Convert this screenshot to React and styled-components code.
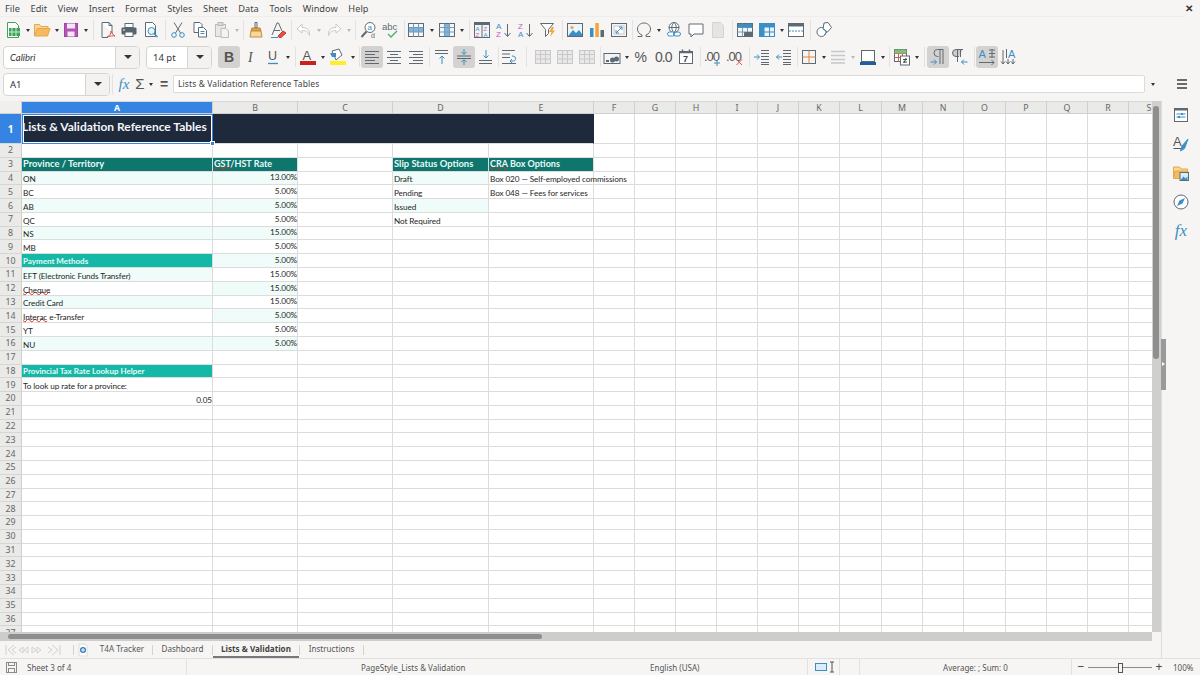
import React from 'react';
import styled, { createGlobalStyle } from 'styled-components';

const Global = createGlobalStyle`
  html, body { margin: 0; padding: 0; width: 1200px; height: 675px; overflow: hidden; background: #f6f5f4; }
  * { box-sizing: border-box; }
`;
const UI = `"Noto Sans", "Open Sans", sans-serif`;
const CELL = `Lato, "Noto Sans", sans-serif`;

const Window = styled.div`
  width: 1200px; height: 675px; display: flex; flex-direction: column; overflow: hidden;
  background: #f6f5f4; font-family: ${UI}; color: #3d3d3d;
`;
const MenuBar = styled.div`
  height: 17px; flex: none; display: flex; align-items: center; padding: 0 5px; gap: 10.6px; font-size: 9.2px; color: #444;
  border-bottom: 1px solid #eeedec; margin-right: 16px; position: relative;
`;
const MenuItem = styled.span`letter-spacing: .05px;`;
const Close = styled.span`
  position: absolute; left: 1185px; top: 2px; font-size: 10px; font-weight: 700; line-height: 12px; color: #333;
`;
const Toolbar = styled.div`
  height: ${p => p.$h}px; display: flex; align-items: center; padding-left: ${p => p.$pl || 0}px; padding-bottom: ${p => p.$pb || 0}px; flex: none;
`;
const ToolBtn = styled.div`
  width: 22px; height: 22px; flex: none; display: flex; align-items: center; justify-content: center; border-radius: 3px;
  background: ${p => p.$active ? '#d3d2d0' : 'transparent'};
  svg { display: block; }
`;
const Caret = styled.div`
  width: ${p => p.$w}px; height: 22px; flex: none; display: flex; align-items: center; justify-content: center;
  &::after { content: ''; border: 2.5px solid transparent; border-top: 3px solid ${p => p.$dim ? '#b9b9b9' : '#333'}; border-bottom: 0; }
`;
const Sep = styled.div`
  width: ${p => p.$w}px; height: 20px; flex: none; position: relative;
  &::after { content: ''; position: absolute; left: 50%; top: 0; bottom: 0; width: 1px; background: #e3e2e0; }
`;
const Combo = styled.div`
  width: ${p => p.$w}px; height: 23px; flex: none; display: flex; border: 1px solid #d6d5d3; border-radius: 4px; background: #fff; overflow: hidden;
  margin-right: ${p => p.$mr || 0}px; font-size: 9.5px; color: #333;
`;
const ComboText = styled.div`
  flex: 1; display: flex; align-items: center; padding-left: 6px; font-style: ${p => p.$italic ? 'italic' : 'normal'};
  font-family: ${p => p.$italic ? CELL : UI};
`;
const ComboBtn = styled.div`
  width: 24px; background: #f3f2f1; border-left: 1px solid #d6d5d3; display: flex; align-items: center; justify-content: center;
  &::after { content: ''; border: 4px solid transparent; border-top: 4.5px solid #333; border-bottom: 0; }
`;
const FormulaInput = styled.div`
  width: 972px; height: 18px; flex: none; background: #fff; border: 1px solid #dcdbd9; border-radius: 2px; padding-left: 4px;
  font-size: 8.5px; letter-spacing: .1px; line-height: 16px; color: #444; margin-left: 1px;
`;
const FxBtn = styled.div`
  width: ${p => p.$w}px; flex: none; text-align: center; color: ${p => p.$c || '#555'};
  font: ${p => p.$font};
`;
const Hamburger = styled.div`
  width: 14px; height: 14px; flex: none; margin-left: 15px; display: flex;
`;
const Main = styled.div`
  height: 557px; display: flex; flex: none; overflow: hidden; position: relative;
`;
const SheetArea = styled.div`width: 1162px; height: 557px; flex: none; display: flex; flex-direction: column; border-right: 1px solid #dedddb;`;
const SheetTop = styled.div`flex: none; height: 531px; display: flex; overflow: hidden; position: relative;`;
const Grid = styled.div`
  width: 1152px; flex: none; display: grid; align-content: start; background: #fff; overflow: hidden;
  grid-template-columns: 22px 191px 85px 95px 96px 105px 41px 41px 41px 41px 41px 41px 42px 41px 41px 42px 41px 41px 41px 41px;
  grid-template-rows: 13px 30px repeat(36, 13.79px);
  font-family: ${CELL}; color: #222;
`;
const ColHead = styled.div`
  background: ${p => p.$sel ? '#3584e4' : '#eaeae8'}; color: ${p => p.$sel ? '#fff' : '#666'};
  font: ${p => p.$sel ? 700 : 400} 8.8px ${UI}; display: flex; align-items: center; justify-content: center;
  border-right: 1px solid #cfcfcd; border-bottom: 1px solid #cfcfcd; border-top: 1px solid #d8d8d6;
`;
const RowHead = styled.div`
  background: ${p => p.$sel ? '#3584e4' : '#eaeae8'}; color: ${p => p.$sel ? '#fff' : '#666'};
  font: ${p => p.$sel ? 700 : 400} ${p => p.$sel ? 10 : 8.8}px ${UI}; display: flex; align-items: center; justify-content: center;
  border-right: 1px solid #cfcfcd; border-bottom: 1px solid #d6d6d4;
`;
const Corner = styled.div`background: #f0efee; border-right: 1px solid #cfcfcd; border-bottom: 1px solid #cfcfcd;`;
const Cell = styled.div`
  background: ${p => p.$bg || '#fff'}; color: ${p => p.$c || '#262626'}; white-space: nowrap; min-width: 0;
  border-right: 1px solid ${p => p.$noline ? (p.$bg || 'transparent') : '#dcdcdc'};
  border-bottom: 1px solid #dcdcdc; padding: ${p => p.$up ? '0 0 2px 1px' : '0 0 0 1px'};
  display: flex; align-items: ${p => p.$head ? 'center' : 'flex-end'}; justify-content: ${p => p.$right ? 'flex-end' : 'flex-start'};
  font-weight: ${p => p.$bold ? 700 : 400}; font-size: ${p => p.$fs || 8.2}px; line-height: 10px;
  letter-spacing: ${p => p.$bold ? 0 : -0.1}px;
  ${p => p.$lift ? `position: relative; z-index: ${p.$lift};` : ''}
  ${p => p.$span ? `grid-column: span ${p.$span};` : ''}
`;
const TitleCell = styled(Cell)`
  align-items: center; padding: 0 0 4px 0; position: relative; box-shadow: inset 0 0 0 1px #fff; border: 1px solid #3584e4; z-index: 3;
  text-indent: -1px; line-height: 14px;
`;
const Handle = styled.span`
  position: absolute; right: -3px; bottom: -3px; width: 5px; height: 5px; background: #3584e4; border: 1px solid #fff;
`;
const CellText = styled.span`display: block;`;
const Squiggle = styled.span`
  text-decoration: underline wavy #dc2f26 1px; text-underline-offset: -1.5px; text-decoration-skip-ink: none;
`;
const VScroll = styled.div`
  width: 9px; flex: none; background: #cfcfcd; padding: 5px 1px 0; 
`;
const VThumb = styled.div`width: 6px; height: 253px; background: #8e8e8e; border-radius: 3px;`;
const HScroll = styled.div`
  flex: none; height: 9px; width: 1152px; background: #cdcdcb; padding: 1.5px 0 0 8px; position: relative;
`;
const HThumb = styled.div`width: 534px; height: 5px; background: #8e8e8e; border-radius: 3px;`;
const TabBar = styled.div`
  flex: 1; display: flex; align-items: center; font-size: 8.1px; color: #555; padding-left: 5px;
`;
const TabNav = styled.div`width: 60px; flex: none; display: flex; align-items: center; margin-right: 8px;`;
const TabSep = styled.div`width: 1px; height: 10px; background: #d3d2d0; flex: none;`;
const Tab = styled.div`
  height: 17px; width: ${p => p.$w}px; flex: none; display: flex; align-items: center; justify-content: center;
  font-weight: ${p => p.$active ? 700 : 400}; color: ${p => p.$active ? '#444' : '#555'};
  border-bottom: ${p => p.$active ? '2px solid #77767b' : '2px solid transparent'};
`;
const AddTab = styled.div`width: 18px; flex: none; display: flex; justify-content: center;`;
const Sidebar = styled.div`
  width: 38px; flex: none; display: flex; flex-direction: column; align-items: center; gap: 11px; padding-top: 5px;
`;
const SideGrip = styled.div`
  position: absolute; left: 1160.5px; top: 238px; width: 5px; height: 51px; background: #9a9a9a;
  &::after { content: ''; position: absolute; left: 1px; top: 23px; border: 2.5px solid transparent; border-left: 3px solid #fff; border-right: 0; }
`;
const StatusBar = styled.div`
  flex: none; height: 17px; display: flex; align-items: center; font-size: 8px; color: #555; border-top: 1px solid #e2e1df;
`;
const StatusCell = styled.div`
  width: ${p => p.$w}px; flex: none; height: 100%; display: flex; align-items: center; justify-content: ${p => p.$center ? 'center' : 'flex-start'};
  padding-left: ${p => p.$pl || 0}px; border-right: ${p => p.$line ? '1px solid #e2e1df' : '0'}; gap: ${p => p.$gap || 0}px;
`;
const Slider = styled.div`
  width: 64px; height: 1px; background: #8a8a8a; position: relative; flex: none;
  &::after { content: ''; position: absolute; left: 30px; top: -3.5px; width: 3px; height: 8px; border: 1px solid #555; background: #f6f5f4; }
`;
const ZoomGlyph = styled.span`font-size: 12px; line-height: 12px; color: #444; width: 14px; text-align: center; flex: none;`;
const ZoomLabel = styled.span`margin-left: 7px;`;

const G = '#5e6a73', B = '#3b8fc4';
const S = ({ children, s = 18 }) => <svg width={s} height={s} viewBox="0 0 18 18" fill="none" strokeWidth="1">{children}</svg>;

const lines = (xs, ys, c = G) => ys.map((y, i) => <path key={i} d={`M${xs[i % xs.length][0]} ${y}H${xs[i % xs.length][1]}`} stroke={c} />);
const tableIcon = (hdr, grey) => <>
  <rect x="1.5" y="2.5" width="15" height="13" fill={grey ? '#e9e9e9' : '#f2f7fb'} stroke={grey ? '#c8c8c8' : G} />
  {hdr === 'row' && <rect x="2" y="6.500" width="14" height="4.500" fill="#7ab6e2" />}
  {hdr === 'col' && <rect x="6.500" y="3" width="5" height="12" fill="#7ab6e2" />}
  <path d="M6.5 2.5v13M11.5 2.5v13M1.5 6.5h15M1.5 11h15" stroke={grey ? '#c8c8c8' : '#7f98ab'} />
</>;
const ICONS = {
  new: <><path d="M3.5 1.5h8l3 3v12h-11z" fill="#fff" stroke="#3fa35a" /><rect x="5" y="7" width="11" height="8" fill="#3fa35a" /><path d="M8 7v8M12 7v8M5 11h11" stroke="#c8ecd2" /></>,
  open: <><path d="M1.5 14.5v-11h5l1.5 2h7v2" fill="#f8d89a" stroke="#e6a64a" /><path d="M1.5 15l2.5-7.5h13L14.500 15z" fill="#f5b95f" stroke="#e6a64a" /></>,
  save: <><rect x="2.500" y="2.500" width="13" height="13" fill="#b455b6" stroke="#a145a3" /><rect x="5" y="2.500" width="8" height="5" fill="#f6e6f6" /><rect x="5.500" y="10.500" width="7" height="5" fill="#f6e6f6" /></>,
  pdf: <><path d="M4 1.500h7l3 3v8" stroke={G} fill="#fff" /><path d="M4 1.500v15h6" stroke={G} /><path d="M11 1.500v3h3" stroke={G} /><path d="M9 16c3-1 4-4 4-6 1 2 2 4 4 5-2-.5-5 0-8 1z" stroke="#d9534f" fill="none" /></>,
  print: <><rect x="5" y="2.500" width="8" height="4" fill="#fff" stroke={G} /><rect x="1.500" y="6.500" width="15" height="7" rx="1" fill="#56646e" /><rect x="5" y="11" width="8" height="4.500" fill="#fff" stroke={G} /><path d="M3 9h2" stroke="#fff" /></>,
  preview: <><path d="M3.500 1.500h7l3 3v11h-10z" fill="#fff" stroke={G} /><circle cx="9.500" cy="10" r="3.500" stroke={B} fill="#eaf3fa" /><path d="M12 12.500l3.500 3.500" stroke={B} strokeWidth="1.500" /></>,
  cut: <><path d="M5 1.500l6.500 10.500M13 1.500L6.500 12" stroke={G} /><circle cx="5" cy="14" r="2.300" stroke={B} /><circle cx="13" cy="14" r="2.300" stroke={B} /></>,
  copy: <><path d="M3 1.500h6l2 2v8H3z" fill="#fff" stroke={G} /><path d="M7.500 6.500h5l3 3v6.500h-8z" fill="#fff" stroke={G} /><path d="M9.500 10.500h4M9.500 12.500h4" stroke={B} /></>,
  paste: <><rect x="2.500" y="3.500" width="10" height="12" fill="#e8e8e8" stroke="#bcbcbc" /><rect x="5" y="1.500" width="5" height="3" fill="#d6d6d6" stroke="#bcbcbc" /><path d="M8 7.500h5l2.500 2.500v6.500H8z" fill="#f3f3f3" stroke="#bcbcbc" /></>,
  brush: <><path d="M8 1.500h2v5H8z" stroke={G} /><path d="M5 7h8l1 3H4z" fill="#e6a64a" stroke="#b87d2c" /><path d="M4 10h10l1 6H3z" fill="#f7d79b" stroke="#c38d3d" /></>,
  clear: <><path d="M3 14L8 2h1.500L13 10M5 9.500h6" stroke={G} /><path d="M9 15l5-5 3 2-5 4.500H10z" fill="#e2504c" stroke="#c63c38" /><path d="M2 16.500h7" stroke={B} /></>,
  undo: <><path d="M7 3L2 8l5 4V9.500c4 0 6 1 7.500 5 .5-5-2-8-7.500-8z" stroke="#c9c9c9" fill="#fff" /></>,
  redo: <><path d="M11 3l5 5-5 4V9.500c-4 0-6 1-7.500 5C3 9.500 5.500 6.500 11 6.500z" stroke="#c9c9c9" fill="#fff" /></>,
  find: <><circle cx="10" cy="6.500" r="5" stroke={G} fill="#fff" /><path d="M6.500 10.500L1.500 16" stroke={G} strokeWidth="2" /><text x="7.500" y="9" fontSize="8" fill={B} fontFamily="Liberation Sans">a</text><text x="11" y="17" fontSize="7" fill={G} fontFamily="Liberation Sans">d</text></>,
  spell: <><text x="0" y="9" fontSize="9.500" fill={G} fontFamily="Liberation Sans">abc</text><path d="M6 13l3 3 6-6" stroke="#4cae6a" strokeWidth="1.300" /></>,
  rows: tableIcon('row'),
  cols: tableIcon('col'),
  sort: <><rect x="1.500" y="1.500" width="15" height="15" fill="#f4f4f4" stroke={G} /><path d="M1.500 3h15" stroke={G} strokeWidth="2" /><path d="M9 4v12" stroke={G} /><text x="2.500" y="10" fontSize="6" fill={B} fontFamily="Liberation Sans">A</text><text x="2.500" y="16" fontSize="6" fill="#c45cc6" fontFamily="Liberation Sans">Z</text><text x="10.500" y="10" fontSize="6" fill="#c45cc6" fontFamily="Liberation Sans">Z</text><text x="10.500" y="16" fontSize="6" fill={B} fontFamily="Liberation Sans">A</text></>,
  asc: <><text x="1" y="8" fontSize="8" fill={B} fontFamily="Liberation Sans">A</text><text x="1" y="16" fontSize="8" fill="#c45cc6" fontFamily="Liberation Sans">Z</text><path d="M12.500 3v12M9.500 12l3 3.500 3-3.500" stroke={G} /></>,
  desc: <><text x="1" y="8" fontSize="8" fill="#c45cc6" fontFamily="Liberation Sans">Z</text><text x="1" y="16" fontSize="8" fill={B} fontFamily="Liberation Sans">A</text><path d="M12.500 3v12M9.500 12l3 3.500 3-3.500" stroke={G} /></>,
  filter: <><path d="M1.500 2.500h13l-5 6v4l-3 3v-7z" fill="#fff" stroke={G} /><path d="M13 6l-3 5h2.500L11 16l5-6.500h-2.500L15 6z" fill="#f0a63c" /></>,
  image: <><rect x="1.500" y="2.500" width="15" height="13" fill="#e9f4fb" stroke={G} /><circle cx="6" cy="6.500" r="1.600" fill="#f0a63c" /><path d="M2 15l5-6 3 3 3-3 3 4v2z" fill={B} /></>,
  chart: <><rect x="2" y="7" width="3.500" height="9" fill={B} /><rect x="7.300" y="2" width="3.500" height="14" fill="#f0a63c" /><rect x="12.500" y="9" width="3.500" height="7" fill="#5e6a73" /></>,
  pivot: <><rect x="1.500" y="2.500" width="15" height="13" fill="#f4f4f4" stroke={G} /><rect x="4" y="5" width="10" height="8" fill="#fff" stroke="#c8c8c8" /><path d="M6 12l6-6M12 6H9M12 6v3M6 12h3M6 12V9" stroke={B} /></>,
  omega: <path d="M2.500 15.500H7v-1.500C4 13 2.500 10.500 2.500 8c0-3.500 3-6 6.500-6s6.500 2.500 6.500 6c0 2.500-1.500 5-4.500 6v1.500h4.500" stroke={G} />,
  link: <><circle cx="9" cy="6.500" r="5" stroke={G} fill="#fff" /><path d="M4 6.500h10M9 1.500c-3 3-3 7 0 10M9 1.500c3 3 3 7 0 10" stroke={G} /><rect x="2.500" y="11" width="7" height="4" rx="2" stroke={B} fill="#fff" /><rect x="8.500" y="11" width="7" height="4" rx="2" stroke={B} fill="none" /></>,
  comment: <path d="M2 3h14v10H7l-3 3v-3H2z" stroke={G} fill="#fff" />,
  headerfooter: <><path d="M3.500 1.500h8l3 3v12h-11z" fill="#e4e4e4" stroke="#d4d4d4" /></>,
  tprint: <>{tableIcon()}<rect x="2" y="3" width="14" height="3.500" fill={B} /><rect x="8" y="11" width="9" height="5" rx="1" fill={G} /></>,
  freeze: <><rect x="1.500" y="2.500" width="15" height="13" fill="#eaf3fa" stroke={B} /><rect x="1.500" y="2.500" width="5" height="13" fill={B} /><rect x="1.500" y="2.500" width="15" height="4" fill={B} /><path d="M11.500 6v10M6 11h11" stroke={B} /></>,
  split: <><rect x="1.500" y="2.500" width="15" height="13" fill="#fff" stroke={G} /><path d="M1.500 4h15" stroke={G} strokeWidth="3" /><path d="M2 10h14" stroke={B} strokeDasharray="2 1" /></>,
  shapes: <><circle cx="6.500" cy="11" r="4.500" stroke={G} fill="#fff" /><path d="M9 2l4-.5 3.500 5-4 4.500-4.500-3z" stroke={G} fill="#fff" /><path d="M9 8l3 3-3 3" stroke={B} /></>,
  bold: <text x="4" y="14" fontSize="14" fontWeight="700" fill="#555" fontFamily="Liberation Sans">B</text>,
  italic: <text x="6" y="14" fontSize="14" fontStyle="italic" fill="#555" fontFamily="Liberation Serif">I</text>,
  under: <><text x="4" y="12" fontSize="12.500" fill="#555" fontFamily="Liberation Sans">U</text><path d="M4 15.500h10" stroke={B} strokeWidth="1.300" /></>,
  color: <><text x="3.500" y="12" fontSize="13" fill="#555" fontFamily="Liberation Sans">A</text><rect x="1" y="13" width="16" height="4" fill="#c9211e" /></>,
  hl: <><path d="M3 3l7-2 3 6-6 5z" stroke={G} fill="#fff" /><path d="M1 5h6v4H3z" fill={B} /><rect x="1" y="13" width="16" height="4" fill="#ffef2b" /></>,
  left: lines([[2, 16], [2, 12], [2, 16], [2, 12], [2, 16]], [3.500, 6.500, 9.500, 12.500, 15.500]),
  center: lines([[2, 16], [5, 13], [2, 16], [5, 13], [2, 16]], [3.500, 6.500, 9.500, 12.500, 15.500]),
  right: lines([[2, 16], [6, 16], [2, 16], [6, 16], [2, 16]], [3.500, 6.500, 9.500, 12.500, 15.500]),
  top: <>{lines([[2, 15], [2, 15]], [2.500, 5.500])}<path d="M9 16V8M6.500 10.500L9 8l2.500 2.500" stroke={B} /></>,
  vcenter: <>{lines([[2, 16], [2, 16]], [8, 10.500])}<path d="M9 1v5M6.500 4L9 6.500 11.500 4M9 17v-5M6.500 14L9 11.500 11.500 14" stroke={B} /></>,
  bottom: <>{lines([[2, 15], [2, 15]], [12.500, 15.500])}<path d="M9 2v8M6.500 7.500L9 10l2.500-2.500" stroke={B} /></>,
  wrap: <>{lines([[2, 15], [2, 10], [2, 10], [2, 16]], [2.500, 6, 9.500, 15.500])}<path d="M12 8c3 0 4 1.500 3.500 3.500S12 13 10 13M12 11l-2 2 2 2" stroke={B} /></>,
  merge: tableIcon(null, true),
  currency: <><rect x="1" y="5.500" width="16" height="10" fill="#f4f4f4" stroke={G} /><circle cx="9.500" cy="12" r="2.500" fill={G} /><circle cx="13.500" cy="11" r="2.500" fill={G} /><rect x="3" y="12" width="3" height="2" fill={G} /></>,
  percent: <text x="1.500" y="14" fontSize="14" fill="#555" fontFamily="Liberation Sans">%</text>,
  number: <text x="0" y="14" fontSize="14" fill="#555" fontFamily="Liberation Sans" letterSpacing="-1">0.0</text>,
  date: <><rect x="2.500" y="3.500" width="13" height="12" fill="#fff" stroke={G} /><path d="M2.500 4.500h13M5.500 1.500v3M12.500 1.500v3" stroke={G} strokeWidth="1.500" /><text x="6" y="14" fontSize="9" fontWeight="700" fill="#444" fontFamily="Liberation Sans">7</text></>,
  adddec: <><text x="0" y="13" fontSize="13" fill="#555" fontFamily="Liberation Sans" letterSpacing="-1">.00</text><path d="M13 12v6M10 15h6" stroke={B} /></>,
  deldec: <><text x="0" y="13" fontSize="13" fill="#555" fontFamily="Liberation Sans" letterSpacing="-1">.00</text><path d="M10.500 11.500l5.500 5.500M16 11.500L10.500 17" stroke="#e0504c" /></>,
  indent: <>{lines([[8, 16]], [2.500, 5.500, 8.500, 11.500, 14.500, 16.500])}<path d="M1 9h5M4 6.500L6.500 9 4 11.500" stroke={B} /></>,
  outdent: <>{lines([[8, 16]], [2.500, 5.500, 8.500, 11.500, 14.500, 16.500])}<path d="M7 9H1.500M4 6.500L1.500 9 4 11.500" stroke={B} /></>,
  borders: <><rect x="2.500" y="2.500" width="13" height="13" stroke={G} /><path d="M9 2.500v13M2.500 9h13" stroke="#d7883a" /></>,
  bstyle: <path d="M2 3.500h14M2 7.500h14M2 11.500h14M2 15h14" stroke="#c8c8c8" strokeWidth="1.500" />,
  bcolor: <><rect x="2.500" y="2.500" width="13" height="11" fill="#fff" stroke={G} /><path d="M1 15.500h16" stroke="#1f5f9e" strokeWidth="3" /></>,
  cond: <><rect x="1.500" y="1.500" width="12" height="12" fill="#fff" stroke={G} /><path d="M1.500 5.500h12M1.500 9.500h12M5.500 1.500v12M9.500 1.500v12" stroke="#cf5b53" /><path d="M1.500 1.500h12v4h-12z" fill="#7fbf7b" /><rect x="7.500" y="8" width="9" height="9" fill="#fff" stroke={G} /><path d="M10 11.500h4M10 14h4M13 10l-2 5" stroke="#444" /></>,
  ltr: <><path d="M14.500 1.500H8.500a3 3 0 000 7h1M11 2v14M14 2v14" stroke={G} /><path d="M1.500 14h6M5 11.500L7.500 14 5 16.500" stroke={B} /></>,
  rtl: <><path d="M12 1.500H5a3 3 0 000 7h3M6.500 2v12M9.500 2v7" stroke={G} fill="#ccc" /><path d="M16.500 14h-6M13 11.500L10.500 14l2.500 2.500" stroke={B} /></>,
  hdir: <><text x="0.500" y="10" fontSize="11" fill={B} fontFamily="Liberation Sans">A</text><path d="M11 2h6M11 5.500h6M11 9h6M14 1v9" stroke={G} /><path d="M1 14.500h15M13.500 12l2.500 2.500-2.500 2.500" stroke={G} /></>,
  vdir: <><text x="8" y="10" fontSize="11" fill={B} fontFamily="Liberation Sans">A</text><path d="M3 2v14M1 13.500L3 16l2-2.500M8 11v5M6 13.500L8 16l2-2.500M13 11v5M11 13.500l2 2.500 2-2.500" stroke={G} /><path d="M6.500 1v9" stroke={G} /></>,
};
const Icon = ({ n }) => <S>{ICONS[n]}</S>;

const row1 = [
  ['new'], 7, ['open'], 7, ['save'], 8, -6, ['pdf'], ['print'], ['preview'], -5, ['cut'], ['copy'], ['paste'], 'd7', -5, ['brush'], ['clear'], -4,
  ['undo'], 'd8', ['redo'], 'd7', -6, ['find'], ['spell'], -3, ['rows'], 9, ['cols'], 8, -5, ['sort'], ['asc'], ['desc'], ['filter'], -5,
  ['image'], ['chart'], ['pivot'], -3, ['omega'], 8, ['link'], ['comment'], ['headerfooter'], -5, ['tprint'], ['freeze'], 7, ['split'], -6, ['shapes'],
];
const row2 = [
  ['bold', 1], ['italic'], ['under'], 8, -5, ['color'], 8, ['hl'], 8, -4, ['left', 1], ['center'], ['right'], -4, ['top'], ['vcenter', 1], ['bottom'], -1, ['wrap'], -12,
  ['merge'], ['merge'], ['merge'], -3, ['currency'], 8, ['percent'], ['number'], ['date'], -5, ['adddec'], ['deldec'], -5, ['indent'], ['outdent'], -3,
  ['borders'], 7, ['bstyle'], 'x8', ['bcolor'], 8, -4, ['cond'], 8, -6, ['ltr', 1], ['rtl'], -5, ['hdir', 1], ['vdir'],
];
const renderTools = items => items.map((it, i) => {
  if (Array.isArray(it)) return <ToolBtn key={i} $active={!!it[1]}><Icon n={it[0]} /></ToolBtn>;
  if (typeof it === 'number') return it < 0 ? <Sep key={i} $w={-it} /> : <Caret key={i} $w={it} />;
  return <Caret key={i} $w={+it.slice(1)} $dim />;
});

const MENU = ['File', 'Edit', 'View', 'Insert', 'Format', 'Styles', 'Sheet', 'Data', 'Tools', 'Window', 'Help'];
const COLS = ['A', 'B', 'C', 'D', 'E', 'F', 'G', 'H', 'I', 'J', 'K', 'L', 'M', 'N', 'O', 'P', 'Q', 'R', 'S'];
const MINT = '#effcf9', DK = '#0f766e', TL = '#14b8a6', NAVY = '#1e293b', HT = '#e8fbf7';

const DATA = {
  3: { A: { t: 'Province / Territory', bg: DK, c: HT, bold: 1, fs: 9.4 }, B: { t: <><Squiggle>GST</Squiggle>/HST Rate</>, bg: DK, c: HT, bold: 1, fs: 9, sq: 1 }, D: { t: 'Slip Status Options', bg: DK, c: HT, bold: 1, fs: 9.4 }, E: { t: <><Squiggle>CRA</Squiggle> Box Options</>, bg: DK, c: HT, bold: 1, fs: 9, sq: 1 } },
  4: { A: { t: 'ON', bg: MINT }, B: { t: '13.00%', r: 1, bg: MINT }, D: { t: 'Draft', bg: MINT }, E: { t: 'Box 020 — Self-employed commissions' } },
  5: { A: { t: 'BC' }, B: { t: '5.00%', r: 1 }, D: { t: 'Pending' }, E: { t: 'Box 048 — Fees for services' } },
  6: { A: { t: 'AB', bg: MINT }, B: { t: '5.00%', r: 1, bg: MINT }, D: { t: 'Issued', bg: MINT } },
  7: { A: { t: 'QC' }, B: { t: '5.00%', r: 1 }, D: { t: 'Not Required' } },
  8: { A: { t: 'NS', bg: MINT }, B: { t: '15.00%', r: 1, bg: MINT } },
  9: { A: { t: 'MB' }, B: { t: '5.00%', r: 1 } },
  10: { A: { t: 'Payment Methods', bg: TL, c: HT, bold: 1, fs: 8 }, B: { t: '5.00%', r: 1, bg: MINT } },
  11: { A: { t: 'EFT (Electronic Funds Transfer)', bg: MINT }, B: { t: '15.00%', r: 1 } },
  12: { A: { t: <Squiggle>Cheque</Squiggle>, sq: 1 }, B: { t: '15.00%', r: 1, bg: MINT } },
  13: { A: { t: 'Credit Card', bg: MINT }, B: { t: '15.00%', r: 1 } },
  14: { A: { t: <><Squiggle>Interac</Squiggle> e-Transfer</>, sq: 1 }, B: { t: '5.00%', r: 1, bg: MINT } },
  15: { A: { t: 'YT' }, B: { t: '5.00%', r: 1 } },
  16: { A: { t: 'NU', bg: MINT }, B: { t: '5.00%', r: 1, bg: MINT } },
  18: { A: { t: 'Provincial Tax Rate Lookup Helper', bg: TL, c: HT, bold: 1, fs: 8 } },
  19: { A: { t: 'To look up rate for a province:' } },
  20: { A: { t: '0.05', r: 1 } },
};

const rows = Array.from({ length: 36 }, (_, i) => i + 2);
const Sheet = () => (
  <Grid>
    <Corner />
    {COLS.map(c => <ColHead key={c} $sel={c === 'A'}>{c}</ColHead>)}
    <RowHead $sel>1</RowHead>
    <TitleCell $bg={NAVY} $c="#f1f5f9" $bold $fs={12}><CellText>Lists &amp; Validation Reference Tables</CellText><Handle /></TitleCell>
    <Cell $bg={NAVY} $span={4} $noline />
    {COLS.slice(5).map(c => <Cell key={c} />)}
    {rows.map(r => (
      <React.Fragment key={r}>
        <RowHead>{r}</RowHead>
        {COLS.map(c => {
          const d = (DATA[r] || {})[c];
          if (!d) return <Cell key={c} />;
          return (
            <Cell key={c} $bg={d.bg} $c={d.c} $bold={d.bold} $fs={d.fs} $right={d.r} $head={d.bold} $lift={d.sq ? 2 : 1} $up={d.r && r < 20}>
              <CellText>{d.t}</CellText>
            </Cell>
          );
        })}
      </React.Fragment>
    ))}
  </Grid>
);

const SideIcons = [
  <S key="p"><rect x="2.500" y="2.500" width="13" height="13" fill="#fff" stroke={G} /><path d="M2.500 3.500h13" stroke={G} strokeWidth="2" /><path d="M4.500 8h9M4.500 11h9" stroke={B} /><rect x="9" y="7" width="2" height="2" fill={B} /><rect x="6" y="10" width="2" height="2" fill={B} /></S>,
  <S key="s"><text x="1" y="11" fontSize="13" fill="#555" fontFamily="Liberation Sans">A</text><path d="M1.500 13.500h8" stroke="#555" /><path d="M16 4l-6 7-1.500 5 4-2.500z" fill={B} stroke={B} /></S>,
  <S key="g"><path d="M1.500 14V3h6l1.500 2h6.500v3" fill="#f8d89a" stroke="#e6a64a" /><path d="M1.500 14.500L3 7h13l-1 7.500z" fill="#f5b95f" stroke="#e6a64a" /><rect x="8" y="8.500" width="8.500" height="8" fill="#d9edf8" stroke={G} /><path d="M8.500 16l3-3.500 2 2 2-2v3.500z" fill={B} /></S>,
  <S key="n"><circle cx="9" cy="9" r="7" fill="#fff" stroke={G} /><path d="M13 5L10.500 10.500 5 13l2.500-5.500z" fill={B} /></S>,
  <FxBtn key="f" $w={20} $c="#3b8fc4" $font={`italic 17px/18px "Liberation Serif", serif`}>fx</FxBtn>,
];

export default function App() {
  return (
    <Window>
      <Global />
      <MenuBar>
        {MENU.map(m => <MenuItem key={m}>{m}</MenuItem>)}
        <Close>✕</Close>
      </MenuBar>
      <Toolbar $h={26} $pl={2}>{renderTools(row1)}</Toolbar>
      <Toolbar $h={28} $pl={3}>
        <Combo $w={137} $mr={6}><ComboText $italic>Calibri</ComboText><ComboBtn /></Combo>
        <Combo $w={66} $mr={6}><ComboText>14 pt</ComboText><ComboBtn /></Combo>
        {renderTools(row2)}
      </Toolbar>
      <Toolbar $h={30} $pl={3} $pb={4}>
        <Combo $w={107}><ComboText>A1</ComboText><ComboBtn /></Combo>
        <Sep $w={4} />
        <FxBtn $w={20} $c="#3b8fc4" $font={`italic 15px/18px "Liberation Serif", serif`}>fx</FxBtn>
        <FxBtn $w={12} $font={`15px/18px "Liberation Sans", sans-serif`}>Σ</FxBtn>
        <Caret $w={10} />
        <FxBtn $w={16} $font={`700 14px/18px "Liberation Sans", sans-serif`}>=</FxBtn>
        <FormulaInput>Lists &amp; Validation Reference Tables</FormulaInput>
        <Caret $w={15} />
        <Hamburger>
          <svg width="14" height="14" viewBox="0 0 14 14"><path d="M2 3h10M2 7h10M2 11h10" stroke="#3d3d3d" strokeWidth="1.400" /></svg>
        </Hamburger>
      </Toolbar>
      <Main>
        <SheetArea>
          <SheetTop>
            <Sheet />
            <VScroll><VThumb /></VScroll>
          </SheetTop>
          <HScroll><HThumb /></HScroll>
          <TabBar>
            <TabNav>
              <svg width="60" height="12" viewBox="0 0 60 12" fill="none" stroke="#d0d0ce">
                <path d="M1 1v10M9 1L3 6l6 5M11 3L7 6l4 3M18 3l-4 3 4 3v-6zM23 3l-4 3 4 3v-6zM27 3l4 3-4 3v-6zM32 3l4 3-4 3v-6zM47 1l6 5-6 5M43 3l4 3-4 3M55 1v10" />
              </svg>
            </TabNav>
            <TabSep />
            <AddTab>
              <svg width="14" height="14" viewBox="0 0 14 14"><path d="M3 1h6l2 2v10H3z" fill="#fff" stroke="#ddd" /><circle cx="7" cy="7" r="3" fill="#3b78b8" /><path d="M7 5v4M5 7h4" stroke="#fff" strokeWidth="1" /></svg>
            </AddTab>
            <Tab $w={60}>T4A Tracker</Tab>
            <TabSep />
            <Tab $w={59}>Dashboard</Tab>
            <TabSep />
            <Tab $w={86} $active>Lists &amp; Validation</Tab>
            <TabSep />
            <Tab $w={63}>Instructions</Tab>
            <TabSep />
          </TabBar>
        </SheetArea>
        <Sidebar>{SideIcons}</Sidebar>
        <SideGrip />
      </Main>
      <StatusBar>
        <StatusCell $w={187} $pl={5} $gap={9} $line>
          <svg width="13" height="13" viewBox="0 0 13 13" fill="none" stroke="#8a8a8a"><rect x="1.500" y="1.500" width="10" height="10" /><rect x="3.500" y="1.500" width="6" height="3" /><rect x="3.500" y="7.500" width="6" height="4" /></svg>
          Sheet 3 of 4
        </StatusCell>
        <StatusCell $w={173} />
        <StatusCell $w={189} $pl={1}>PageStyle_Lists &amp; Validation</StatusCell>
        <StatusCell $w={259} $pl={101} $line>English (USA)</StatusCell>
        <StatusCell $w={32} $pl={7} $gap={1} $line>
          <svg width="24" height="12" viewBox="0 0 24 12" fill="none"><rect x="0.500" y="2.500" width="11" height="7" fill="#dcecf8" stroke={B} /><path d="M15 1h4M15 11h4M17 1v10" stroke="#555" /></svg>
        </StatusCell>
        <StatusCell $w={20} $line />
        <StatusCell $w={212} $pl={20} $center $line>Average: ; Sum: 0</StatusCell>
        <StatusCell $w={128} $pl={2}>
          <ZoomGlyph>−</ZoomGlyph>
          <Slider />
          <ZoomGlyph>+</ZoomGlyph>
          <ZoomLabel>100%</ZoomLabel>
        </StatusCell>
      </StatusBar>
    </Window>
  );
}
